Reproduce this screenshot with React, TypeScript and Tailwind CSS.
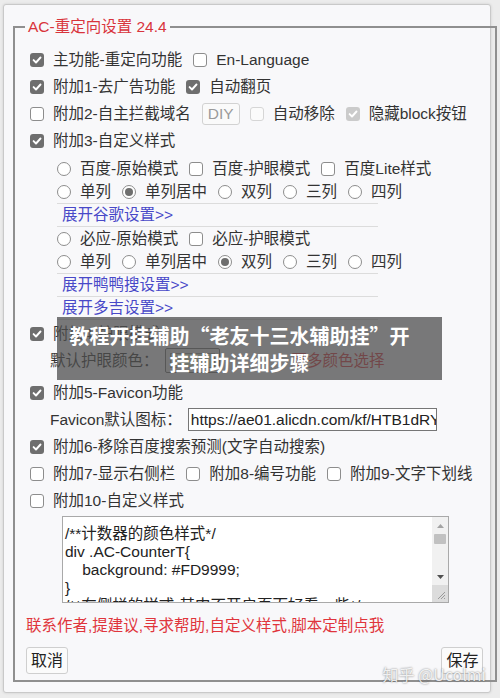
import React from "react";

const CheckSvg = () => (
  <svg width="10" height="10" viewBox="0 0 10 10" fill="none">
    <path d="M1.6 5.1 L4 7.5 L8.5 2.5" stroke="white" strokeWidth="1.9" strokeLinecap="round" strokeLinejoin="round" />
  </svg>
);

function Box({ checked = false, disabled = false }: { checked?: boolean; disabled?: boolean }) {
  if (checked) {
    return (
      <span
        className={
          disabled
            ? "flex-none w-[14px] h-[14px] rounded-[3px] bg-[#cbcbcb] flex items-center justify-center"
            : "flex-none w-[14px] h-[14px] rounded-[3px] bg-[#6e6e6e] flex items-center justify-center"
        }
      >
        <CheckSvg />
      </span>
    );
  }
  return (
    <span
      className={
        disabled
          ? "flex-none w-[14px] h-[14px] rounded-[3px] border border-[#d6d6d6] bg-[#fbfbfb]"
          : "flex-none w-[14px] h-[14px] rounded-[3px] border border-[#8d8d8d] bg-white"
      }
    />
  );
}

function Radio({ checked = false }: { checked?: boolean }) {
  return (
    <span className="flex-none w-[14px] h-[14px] rounded-full border border-[#8d8d8d] bg-white flex items-center justify-center">
      {checked && <span className="w-[8px] h-[8px] rounded-full bg-[#6e6e6e]" />}
    </span>
  );
}

function Ck({ label, checked = false, disabled = false }: { label: string; checked?: boolean; disabled?: boolean }) {
  return (
    <span className="flex items-center mr-[11px]">
      <Box checked={checked} disabled={disabled} />
      <span className="ml-[9px]">{label}</span>
    </span>
  );
}

function Rd({ label, checked = false }: { label: string; checked?: boolean }) {
  return (
    <span className="flex items-center mr-[11px]">
      <Radio checked={checked} />
      <span className="ml-[9px]">{label}</span>
    </span>
  );
}

function Row({ children }: { children: React.ReactNode }) {
  return <div className="flex items-center h-[27px] pl-[4px] whitespace-nowrap">{children}</div>;
}

function SubRow({ children }: { children: React.ReactNode }) {
  return <div className="flex items-center h-[23px] whitespace-nowrap">{children}</div>;
}

function LinkRow({ text }: { text: string }) {
  return (
    <div className="flex items-center h-[23px] pl-[5px] text-[#4848c8] border-b border-[#dcdcdc] whitespace-nowrap">
      {text}
    </div>
  );
}

export default function App() {
  return (
    <div className="relative w-[500px] h-[698px] overflow-hidden bg-[#ececec] [font-family:'Liberation_Sans','Noto_Sans_CJK_SC',sans-serif] text-[15.5px] text-[#333] leading-none">
      <div className="ml-[3px] mt-[4px] w-[488px] h-[689px] bg-[#f8f8fa] border border-[#c9c9c9] rounded-[3px] shadow-[0_0_3px_rgba(0,0,0,0.12)] pl-[9px] pr-[5px] pt-[12px]">
        <fieldset className="border-2 border-[#8f8f8f] pb-[6px]">
          <legend className="ml-[10px] px-[3px] text-[#d8343c] leading-[20px]">AC-重定向设置 24.4</legend>
          <div className="pl-[11px] pr-[12px] pt-[9px]">
            <Row>
              <Ck label="主功能-重定向功能" checked />
              <Ck label="En-Language" />
            </Row>
            <Row>
              <Ck label="附加1-去广告功能" checked />
              <Ck label="自动翻页" checked />
            </Row>
            <Row>
              <Ck label="附加2-自主拦截域名" />
              <span className="h-[22px] px-[5px] flex items-center border border-[#d2d2d2] rounded-[3px] bg-[#fafafa] text-[#9a9a9a] mr-[10px]">
                DIY
              </span>
              <Ck label="自动移除" disabled />
              <Ck label="隐藏block按钮" checked disabled />
            </Row>
            <Row>
              <Ck label="附加3-自定义样式" checked />
            </Row>
            <div className="ml-[31px] w-[321px] mt-[3px]">
              <div className="border-b border-[#dcdcdc]">
                <SubRow>
                  <Rd label="百度-原始模式" />
                  <Ck label="百度-护眼模式" />
                  <Ck label="百度Lite样式" />
                </SubRow>
                <SubRow>
                  <Rd label="单列" />
                  <Rd label="单列居中" checked />
                  <Rd label="双列" />
                  <Rd label="三列" />
                  <Rd label="四列" />
                </SubRow>
              </div>
              <LinkRow text="展开谷歌设置>>" />
              <div className="border-b border-[#dcdcdc]">
                <SubRow>
                  <Rd label="必应-原始模式" />
                  <Ck label="必应-护眼模式" />
                </SubRow>
                <SubRow>
                  <Rd label="单列" />
                  <Rd label="单列居中" />
                  <Rd label="双列" checked />
                  <Rd label="三列" />
                  <Rd label="四列" />
                </SubRow>
              </div>
              <LinkRow text="展开鸭鸭搜设置>>" />
              <LinkRow text="展开多吉设置>>" />
            </div>
            <Row>
              <Ck label="附加4-护眼模式" checked />
            </Row>
            <div className="flex items-center h-[27px] pl-[24px] mb-[5px] whitespace-nowrap">
              <span>默认护眼颜色：</span>
              <span className="ml-[6px] w-[55px] h-[25px] border border-[#767676] rounded-[2px] bg-[#efefef] p-[4px]">
                <span className="block w-full h-full bg-[#e3edcd] border border-[#9a9a9a]" />
              </span>
              <span className="ml-[72px] text-[#e0353c]">更多颜色选择</span>
            </div>
            <Row>
              <Ck label="附加5-Favicon功能" checked />
            </Row>
            <div className="flex items-center h-[27px] pl-[24px] whitespace-nowrap">
              <span>Favicon默认图标：</span>
              <span className="ml-[6px] w-[249px] h-[23px] border border-[#767676] bg-white flex items-center pl-[2px] overflow-hidden text-[#222]">
                https://ae01.alicdn.com/kf/HTB1dRYXJXXXXXXXXVXXq6xXFXXX9.png
              </span>
            </div>
            <Row>
              <Ck label="附加6-移除百度搜索预测(文字自动搜索)" checked />
            </Row>
            <Row>
              <Ck label="附加7-显示右侧栏" />
              <Ck label="附加8-编号功能" />
              <Ck label="附加9-文字下划线" />
            </Row>
            <Row>
              <Ck label="附加10-自定义样式" />
            </Row>
            <div className="ml-[36px] mt-[2px] w-[387px] h-[87px] border border-[#a9a9a9] bg-white flex">
              <div className="flex-1 overflow-hidden pl-[2px] pt-[8px] text-[#222] leading-[18px] whitespace-pre">
                {"/**计数器的颜色样式*/\ndiv .AC-CounterT{\n    background: #FD9999;\n}\n/**右侧栏的样式-其中不开启页面好看一些*/"}
              </div>
              <div className="w-[16px] flex flex-col bg-[#f1f1f1]">
                <div className="h-[17px] flex items-center justify-center">
                  <svg width="7" height="4" viewBox="0 0 7 4"><path d="M0 4 L3.5 0 L7 4 Z" fill="#a3a3a3" /></svg>
                </div>
                <div className="h-[34px] px-[2px]">
                  <div className="h-[10px] bg-[#c1c1c1] rounded-[1px]" />
                </div>
                <div className="h-[17px] flex items-center justify-center">
                  <svg width="7" height="4" viewBox="0 0 7 4"><path d="M0 0 L7 0 L3.5 4 Z" fill="#505050" /></svg>
                </div>
                <div className="h-[17px] bg-[#dcdcdc] flex items-end justify-end p-[2px]">
                  <svg width="10" height="10" viewBox="0 0 10 10">
                    <path d="M9 2 L2 9 M9 5 L5 9 M9 8 L8 9" stroke="#9a9a9a" strokeWidth="1" />
                  </svg>
                </div>
              </div>
            </div>
            <div className="mt-[10px] h-[26px] flex items-center text-[#e0353c] whitespace-nowrap">
              联系作者,提建议,寻求帮助,自定义样式,脚本定制点我
            </div>
            <div className="mt-[8px] flex justify-between">
              <span className="h-[27px] px-[4px] flex items-center border border-[#cfcfcf] bg-[#fbfbfb] rounded-[3px] text-[16px] text-[#222]">
                取消
              </span>
              <span className="h-[27px] px-[4px] flex items-center border border-[#cfcfcf] bg-[#fbfbfb] rounded-[3px] text-[16px] text-[#222]">
                保存
              </span>
            </div>
          </div>
        </fieldset>
      </div>

      <div className="absolute left-[57px] top-[317px] w-[385px] h-[63px] bg-[rgba(78,78,78,0.75)] flex flex-col items-center justify-center pr-[20px] text-white font-bold text-[20px] leading-[27px] [font-family:'Noto_Sans_CJK_SC',sans-serif] whitespace-nowrap">
        <div>教程开挂辅助“老友十三水辅助挂”开</div>
        <div>挂辅助详细步骤</div>
      </div>

      <div className="absolute right-[14px] top-[666px] text-[16px] text-[rgba(255,255,255,0.85)] [text-shadow:0_0_2px_rgba(0,0,0,0.55)] [font-family:'Noto_Sans_CJK_SC',sans-serif]">
        知乎 @Ucolmi
      </div>
    </div>
  );
}
